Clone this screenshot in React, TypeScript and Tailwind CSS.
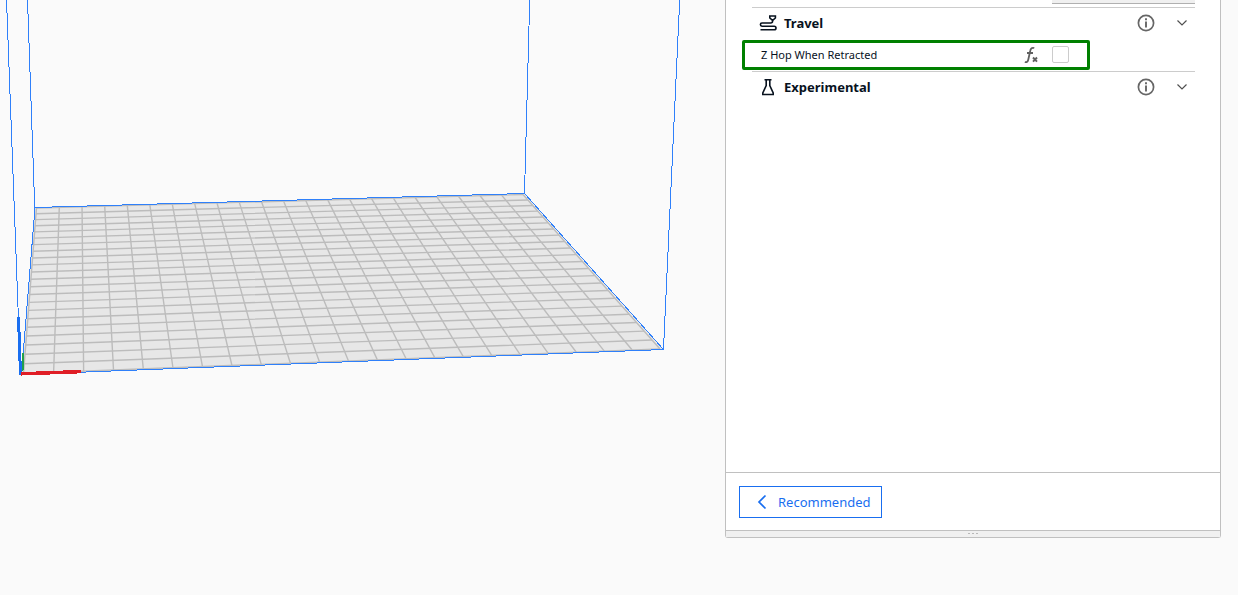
import { useState } from "react";

type Point = [number, number];

const CELLS = 22;

// Build plate corners on screen: back left, back right, front right, front left
const PLATE: Point[] = [[36.5, 208], [523, 194.5], [660, 349], [23.5, 373.5]];

// Maps a (u, v) position on the plate (0..1) to screen space
function project(u: number, v: number): Point {
  const [[x0, y0], [x1, y1], [x2, y2], [x3, y3]] = PLATE;
  const sx = x0 - x1 + x2 - x3;
  const sy = y0 - y1 + y2 - y3;
  const dx1 = x1 - x2;
  const dx2 = x3 - x2;
  const dy1 = y1 - y2;
  const dy2 = y3 - y2;
  const det = dx1 * dy2 - dx2 * dy1;
  const g = (sx * dy2 - dx2 * sy) / det;
  const h = (dx1 * sy - sx * dy1) / det;
  const w = g * u + h * v + 1;
  return [
    ((x1 - x0 + g * x1) * u + (x3 - x0 + h * x3) * v + x0) / w,
    ((y1 - y0 + g * y1) * u + (y3 - y0 + h * y3) * v + y0) / w,
  ];
}

const line = (a: Point, b: Point) => `M${a[0].toFixed(2)} ${a[1].toFixed(2)}L${b[0].toFixed(2)} ${b[1].toFixed(2)}`;

const steps = Array.from({ length: CELLS + 1 }, (_, i) => i / CELLS);
const columns = steps.map((t) => line(project(t, 0), project(t, 1))).join("");
const rows = steps.map((t) => line(project(0, t), project(1, t))).join("");

function BuildVolume() {
  return (
    <svg viewBox="0 0 725 595" className="block h-auto w-full" role="img" aria-label="Build plate">
      <path d="M35 207.5L524.5 194L663 349.5L21.5 374.5Z" fill="#e7e7e7" />
      <path d={rows} stroke="#bcbcbc" strokeWidth="1.4" fill="none" />
      <path d={columns} stroke="#bcbcbc" strokeWidth="1.4" fill="none" />
      <g stroke="#2f80fa" strokeWidth="1" fill="none" shapeRendering="crispEdges">
        <path d="M35 207.5L524.5 193.5L663.5 349.5L21.5 374.5Z" />
        <path d="M6.5 0L20.5 374M27.5 0L34.7 207M529.7 0L524.5 193.5M679.7 0L663.5 349" />
      </g>
      {/* Axes */}
      <g fill="none" shapeRendering="crispEdges">
        <path d="M18.5 317L20.5 375" stroke="#196ef0" strokeWidth="3" />
        <path d="M23 353L22.5 371" stroke="#22a04b" strokeWidth="2" />
        <path d="M21 373.8L81 371.6" stroke="#e01e26" strokeWidth="3.5" />
      </g>
    </svg>
  );
}

function TravelIcon() {
  return (
    <svg viewBox="0 0 18 18" className="size-[18px]" fill="none" stroke="currentColor" strokeWidth="1.6" aria-hidden="true">
      <path d="M10.8 2h5.6v2L13.6 6.400 10.800 4Z" />
      <path d="M13.600 6.400v.6c0 1.200-.8 2-2 2H3a1.500 1.500 0 0 0 0 3.200h12.200a1.700 1.700 0 0 1 0 3.600H1.500" />
    </svg>
  );
}

function FlaskIcon() {
  return (
    <svg viewBox="0 0 18 18" className="size-[18px]" fill="none" stroke="currentColor" strokeWidth="1.6" aria-hidden="true">
      <path d="M5.500 1.800h7M7.200 1.800v5.700L3.800 15v1.500h10.400V15L10.800 7.500V1.800" />
    </svg>
  );
}

function InfoIcon() {
  return (
    <svg viewBox="0 0 18 18" className="size-[18px]" fill="none" stroke="currentColor" aria-hidden="true">
      <circle cx="9" cy="9" r="7.600" strokeWidth="1.700" />
      <path d="M9 4.300v2M9 7.500v6" strokeWidth="1.900" />
    </svg>
  );
}

function ChevronIcon() {
  return (
    <svg viewBox="0 0 12 12" className="size-3" fill="none" stroke="currentColor" strokeWidth="1.200" aria-hidden="true">
      <path d="M1.500 3.500L6 8l4.500-4.500" />
    </svg>
  );
}

function FunctionIcon() {
  return (
    <svg viewBox="0 0 16 18" className="h-[18px] w-4" fill="none" stroke="currentColor" aria-hidden="true">
      <path d="M.8 16c2 .6 3-.2 3.500-2.500L6.300 4.500c.4-2.200 1.700-3.200 4-2.500M3 7h6" strokeWidth="1.800" />
      <path d="M9 11.500l4 4.200M13 11.500L9 15.700" strokeWidth="1.900" />
    </svg>
  );
}

function SectionHeader({ title, icon }: { title: string; icon: React.ReactNode }) {
  return (
    <div className="ml-[10px] mr-[25px] flex h-8 items-center border-t border-[#cccccc] pb-0.5 pl-[7px] pr-[7px] text-[#08121e]">
      {icon}
      <h2 className="ml-[7px] flex-1 text-[13px] font-bold leading-5">{title}</h2>
      <button type="button" aria-label={`About ${title}`} className="text-[#666666]">
        <InfoIcon />
      </button>
      <button type="button" aria-label={`Expand ${title}`} className="ml-[21px] text-[#505050]">
        <ChevronIcon />
      </button>
    </div>
  );
}

export default function App() {
  const [zHop, setZHop] = useState(false);

  return (
    <div className="flex h-screen overflow-hidden bg-[#fafafa] font-['Noto_Sans',sans-serif] text-[#08121e]">
      <main className="min-w-0 flex-1">
        <BuildVolume />
      </main>

      {/* Print settings panel */}
      <aside className="mb-[57px] mr-[17px] flex w-[496px] shrink-0 flex-col rounded-b-[3px] border border-t-0 border-[#c0c0c0] bg-white">
        <div className="flex-1 pl-4">
          <div className="mb-[3px] ml-auto mr-[25px] h-1 w-[143px] border-b border-[#b0b0b0] bg-[#f0f0f0]" />

          <SectionHeader title="Travel" icon={<TravelIcon />} />
          <div className="mb-px mr-[130px] mt-px flex h-[30px] items-center rounded-[2px] border-[3px] border-[#008000] pb-px pl-4 pr-[18px]">
            <label htmlFor="z-hop" className="flex-1 text-[11px] leading-[17px]">Z Hop When Retracted</label>
            <button type="button" aria-label="Show formula" className="mr-3 text-[#606060]">
              <FunctionIcon />
            </button>
            <input
              id="z-hop"
              type="checkbox"
              checked={zHop}
              onChange={(e) => setZHop(e.target.checked)}
              className="size-[17px] appearance-none rounded-[2px] border border-[#cccccc] bg-white checked:bg-[#196ef0]"
            />
          </div>

          <SectionHeader title="Experimental" icon={<FlaskIcon />} />
        </div>

        <footer className="border-t border-[#c0c0c0] px-[13px] pb-3 pt-[13px]">
          <button type="button" className="flex h-8 items-center border border-[#196ef0] pl-4 pr-2.5 text-[13px] leading-5 text-[#196ef0]">
            <svg viewBox="0 0 14 16" className="mr-2 h-4 w-3.5" fill="none" stroke="currentColor" strokeWidth="1.700" aria-hidden="true">
              <path d="M9.500 1.500L3 8l6.500 6.500" />
            </svg>
            Recommended
          </button>
        </footer>

        {/* Resize handle */}
        <div className="flex h-[7px] items-start justify-center gap-0.5 border-t border-[#c0c0c0] bg-[#f0f0f0] pt-0.5">
          <span className="h-px w-0.5 bg-[#b8b8b8]" />
          <span className="h-px w-0.5 bg-[#b8b8b8]" />
          <span className="h-px w-0.5 bg-[#b8b8b8]" />
        </div>
      </aside>
    </div>
  );
}
